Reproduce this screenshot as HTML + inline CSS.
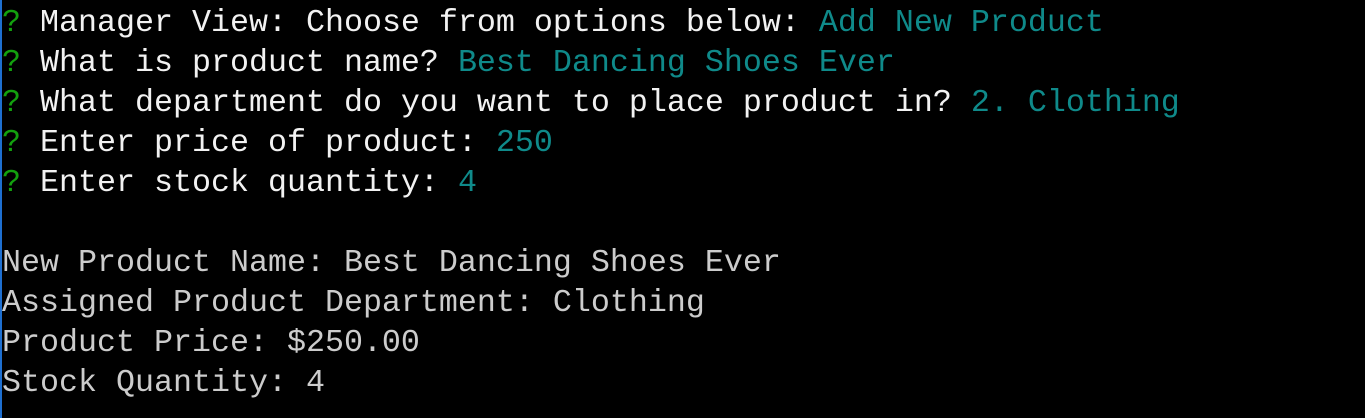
<!DOCTYPE html>
<html><head><style>
html,body{margin:0;padding:0;background:#000;width:1365px;height:418px;overflow:hidden}
body{border-left:2px solid #1e6fd0;box-sizing:border-box}
pre{margin:0;padding:3px 0 0 0;font-family:"Liberation Mono",monospace;font-size:31.67px;line-height:40px;color:#f2f2f2;white-space:pre}
.g{color:#13a10e}.c{color:#0f8a8a}.o{color:#cccccc}
</style></head><body><pre><span class="g">?</span> Manager View: Choose from options below: <span class="c">Add New Product</span>
<span class="g">?</span> What is product name? <span class="c">Best Dancing Shoes Ever</span>
<span class="g">?</span> What department do you want to place product in? <span class="c">2. Clothing</span>
<span class="g">?</span> Enter price of product: <span class="c">250</span>
<span class="g">?</span> Enter stock quantity: <span class="c">4</span>

<span class="o">New Product Name: Best Dancing Shoes Ever
Assigned Product Department: Clothing
Product Price: $250.00
Stock Quantity: 4</span></pre></body></html>
